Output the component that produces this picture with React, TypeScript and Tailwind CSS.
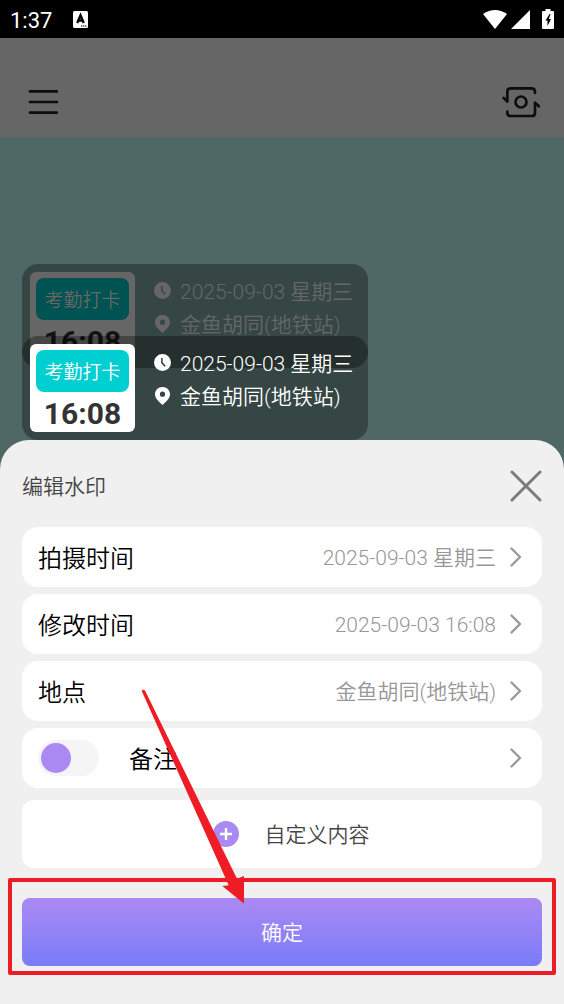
import { useState } from "react";

const settings = [
  { label: "拍摄时间", value: "2025-09-03 星期三" },
  { label: "修改时间", value: "2025-09-03 16:08" },
  { label: "地点", value: "金鱼胡同(地铁站)" },
];

export default function App() {
  const [noteOn, setNoteOn] = useState(false);

  return (
    <div className="flex min-h-screen flex-col bg-[#4f6866] font-[Roboto,'Noto_Sans_CJK_SC',sans-serif] font-[360]">
      <StatusBar />
      <header className="flex h-[99px] items-center justify-between bg-[#666666] pt-7 pr-6 pl-7">
        <button type="button" aria-label="菜单">
          <MenuIcon />
        </button>
        <button type="button" aria-label="切换相机">
          <CameraSwitchIcon />
        </button>
      </header>

      <section className="flex flex-col items-start px-[22px] pt-[127px]">
        <Watermark dimmed />
        <div className="-mt-8">
          <Watermark />
        </div>
      </section>

      <main className="relative grow rounded-t-[29px] bg-[#f0f0f0] px-[22px] pb-9">
        <div className="flex h-[87px] items-center justify-between pt-1">
          <h1 className="pt-[2px] text-[21px] leading-7 text-[#444444]">编辑水印</h1>
          <button type="button" aria-label="关闭">
            <svg width="32" height="32" viewBox="0 0 32 32" fill="none" stroke="#7c7c7c" strokeWidth="3" strokeLinecap="round">
              <path d="M2 2L30 30M30 2L2 30" />
            </svg>
          </button>
        </div>

        <div className="flex flex-col gap-[7px]">
          {settings.map((item) => (
            <button key={item.label} type="button" className="flex h-[60px] items-center rounded-2xl bg-white pr-5 pl-4 text-left">
              <span className="grow pt-[3px] text-2xl text-black">{item.label}</span>
              <span className="mr-[14px] pt-[3px] text-[21px] text-[#979797]">{item.value}</span>
              <ChevronIcon />
            </button>
          ))}
          <div className="flex h-[60px] items-center rounded-2xl bg-white pr-5 pl-4">
            <input
              id="note"
              type="checkbox"
              role="switch"
              checked={noteOn}
              onChange={(e) => setNoteOn(e.target.checked)}
              className="h-9 w-[61px] appearance-none rounded-full bg-[#f5f5f5] p-[3px] before:block before:size-[30px] before:rounded-full before:bg-[#ab89f3] checked:before:translate-x-[25px]"
            />
            <label htmlFor="note" className="ml-[30px] grow pt-[3px] text-2xl text-black">备注</label>
            <button type="button" aria-label="编辑备注">
              <ChevronIcon />
            </button>
          </div>
        </div>

        <button type="button" className="mt-3 flex h-[68px] w-full items-center justify-center gap-[26px] rounded-xl bg-white pl-[18px] text-[21px] text-[#444444]">
          <svg width="26" height="26" viewBox="0 0 26 26">
            <circle cx="13" cy="13" r="13" fill="#ab89f3" />
            <path d="M13 7V19M7 13H19" stroke="#ffffff" strokeWidth="2.4" />
          </svg>
          <span className="pt-[3px]">自定义内容</span>
        </button>

        <div className="-mx-[14px] mt-[10px] rounded-xs border-4 border-[#ee1c25] px-[10px] pt-4 pb-[5px]">
          <button type="button" className="h-[68px] w-full rounded-lg bg-linear-to-b from-[#ab89f3] to-[#7a7bf8] pt-[3px] text-[21px] text-white">
            确定
          </button>
        </div>

        <svg className="pointer-events-none absolute top-[248px] left-[141px]" width="104" height="217" viewBox="141 688 104 217">
          <path d="M141.6 690.8L143.6 689.4L145 690.4L237 878.7L244 876V903.7L222.3 886L228.7 885.3Z" fill="#ee1c25" />
        </svg>
      </main>
    </div>
  );
}

function StatusBar() {
  return (
    <div className="flex h-[38px] items-center bg-black px-[10px] text-white">
      <span className="pt-[2px] text-[22px] font-normal">1:37</span>
      <svg className="ml-[21px]" width="15" height="17" viewBox="0 0 15 17">
        <rect width="15" height="17" rx="1.5" fill="#ffffff" />
        <path d="M4.2 12L7.5 4.2L10.8 12M5.5 9.5H9.5" fill="none" stroke="#000000" strokeWidth="2.3" />
        <path d="M8 15H13.5" stroke="#000000" strokeDasharray="1.4 0.6" />
      </svg>
      <svg className="ml-auto" width="24" height="19" viewBox="0 0 24 19">
        <path d="M0 4Q12 -4 24 4L12 19Z" fill="#ffffff" />
      </svg>
      <svg className="ml-1" width="19" height="19" viewBox="0 0 19 19">
        <path d="M19 0V19H0Z" fill="#ffffff" />
      </svg>
      <svg className="ml-3" width="12" height="20" viewBox="0 0 12 20">
        <path d="M3.5 0H8.5V2H11Q12 2 12 3V19Q12 20 11 20H1Q0 20 0 19V3Q0 2 1 2H3.5Z" fill="#ffffff" />
        <path d="M7.5 5L3.5 11.5H5.5V17L9 10H6.8L8.5 5Z" fill="#000000" />
      </svg>
    </div>
  );
}

function Watermark({ dimmed = false }: { dimmed?: boolean }) {
  const text = dimmed ? "text-[#666666]" : "text-white";
  return (
    <div className="flex h-[104px] w-[346px] items-start rounded-2xl bg-black/32 p-2">
      <div className={`h-[88px] w-[105px] rounded-md p-[6px] text-center ${dimmed ? "bg-[#666666]" : "bg-white"}`}>
        <div className={`h-[42px] rounded-lg text-[19px] leading-[45px] ${dimmed ? "bg-[#005353] text-[#666666]" : "bg-[#00cfd1] text-white"}`}>考勤打卡</div>
        <div className={`text-[30px] leading-[44px] font-bold ${dimmed ? "text-[#141414]" : "text-[#333333]"}`}>16:08</div>
      </div>
      <div className={`ml-[19px] pt-[2px] text-[21px] leading-[30px] whitespace-nowrap ${text}`}>
        <div className="flex items-center gap-[9px]">
          <ClockIcon />
          <span className="pt-[3px]">2025-09-03 星期三</span>
        </div>
        <div className="flex items-center gap-[9px]">
          <PinIcon />
          <span className="pt-[3px]">金鱼胡同(地铁站)</span>
        </div>
      </div>
    </div>
  );
}

function MenuIcon() {
  return (
    <svg width="30" height="26" viewBox="0 0 30 26" fill="none" stroke="#0d0d0d" strokeWidth="2.7" strokeLinecap="round">
      <path d="M2 2.4H29M2 13H29M2 23.6H29" />
    </svg>
  );
}

function CameraSwitchIcon() {
  return (
    <svg width="38" height="32" viewBox="232 258 114 96" fill="none" stroke="#0d0d0d" strokeWidth="8" strokeLinecap="round" strokeLinejoin="round">
      <path d="M237 294L248 305V275Q248 265 258 265H320Q331 265 331 276V279" />
      <path d="M343 319L331 308V338Q331 348 321 348H258Q248 348 248 338V335" />
      <circle cx="289" cy="306" r="16.5" />
    </svg>
  );
}

function ChevronIcon() {
  return (
    <svg width="12" height="20" viewBox="0 0 12 20" fill="none" stroke="#9a9a9a" strokeWidth="2.4" strokeLinecap="round" strokeLinejoin="round">
      <path d="M1.5 1.5L10 10L1.5 18.5" />
    </svg>
  );
}

function ClockIcon() {
  return (
    <svg width="17" height="17" viewBox="0 0 17 17">
      <path
        fill="currentColor"
        fillRule="evenodd"
        d="M8.5 0A8.5 8.5 0 1 1 8.5 17A8.5 8.5 0 1 1 8.5 0ZM7.2 4V9L10.6 12.8L11.7 11.8L8.6 8.5V4Z"
      />
    </svg>
  );
}

function PinIcon() {
  return (
    <svg width="17" height="18" viewBox="0 0 17 18">
      <path
        fill="currentColor"
        fillRule="evenodd"
        d="M8.5 0C12.8 0 16 3.2 16 7.3C16 11.5 12 15 8.5 18C5 15 1 11.5 1 7.3C1 3.2 4.2 0 8.5 0ZM8.5 4.6A2.6 2.6 0 1 0 8.5 9.8A2.6 2.6 0 1 0 8.5 4.6Z"
      />
    </svg>
  );
}
